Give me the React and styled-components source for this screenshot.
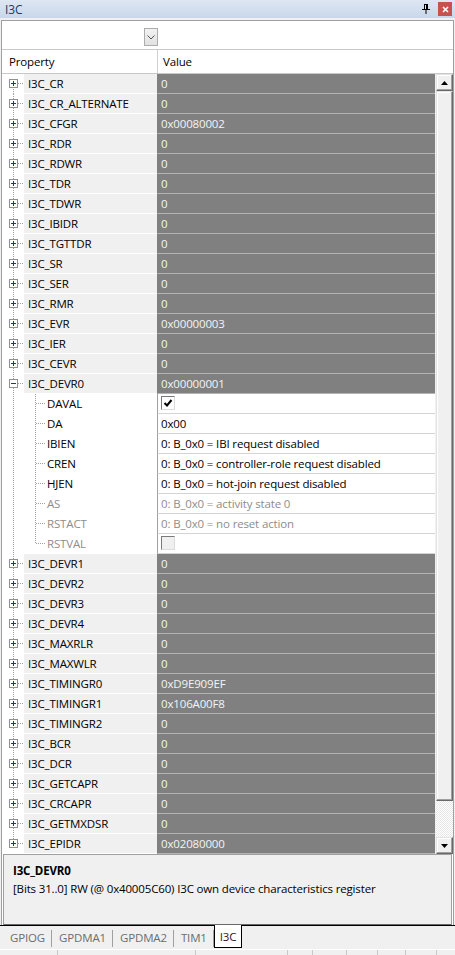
import React from "react";
import styled, { createGlobalStyle } from "styled-components";

const GlobalStyle = createGlobalStyle`
  html, body { margin: 0; padding: 0; background: #f0f0f0; }
  body {
    font-family: "Open Sans", "Noto Sans", "DejaVu Sans", sans-serif;
    font-size: 11.5px;
    letter-spacing: -0.15px;
  }
  * { box-sizing: border-box; }
`;

const registers = [
  ["I3C_CR", "0"],
  ["I3C_CR_ALTERNATE", "0"],
  ["I3C_CFGR", "0x00080002"],
  ["I3C_RDR", "0"],
  ["I3C_RDWR", "0"],
  ["I3C_TDR", "0"],
  ["I3C_TDWR", "0"],
  ["I3C_IBIDR", "0"],
  ["I3C_TGTTDR", "0"],
  ["I3C_SR", "0"],
  ["I3C_SER", "0"],
  ["I3C_RMR", "0"],
  ["I3C_EVR", "0x00000003"],
  ["I3C_IER", "0"],
  ["I3C_CEVR", "0"],
  ["I3C_DEVR0", "0x00000001", true],
  ["I3C_DEVR1", "0"],
  ["I3C_DEVR2", "0"],
  ["I3C_DEVR3", "0"],
  ["I3C_DEVR4", "0"],
  ["I3C_MAXRLR", "0"],
  ["I3C_MAXWLR", "0"],
  ["I3C_TIMINGR0", "0xD9E909EF"],
  ["I3C_TIMINGR1", "0x106A00F8"],
  ["I3C_TIMINGR2", "0"],
  ["I3C_BCR", "0"],
  ["I3C_DCR", "0"],
  ["I3C_GETCAPR", "0"],
  ["I3C_CRCAPR", "0"],
  ["I3C_GETMXDSR", "0"],
  ["I3C_EPIDR", "0x02080000"],
];

const fields = [
  { name: "DAVAL", check: true },
  { name: "DA", value: "0x00" },
  { name: "IBIEN", value: "0: B_0x0 = IBI request disabled" },
  { name: "CREN", value: "0: B_0x0 = controller-role request disabled" },
  { name: "HJEN", value: "0: B_0x0 = hot-join request disabled" },
  { name: "AS", value: "0: B_0x0 = activity state 0", disabled: true },
  { name: "RSTACT", value: "0: B_0x0 = no reset action", disabled: true },
  { name: "RSTVAL", check: false, disabled: true },
];

const tabs = ["GPIOG", "GPDMA1", "GPDMA2", "TIM1"];
const statusCells = [58, 138, 92, 25, 34, 31, 28, 31];

const Window = styled.div`
  width: 455px;
  height: 955px;
  display: flex;
  flex-direction: column;
  background: #f0f0f0;
  overflow: hidden;
`;

const TitleBar = styled.div`
  height: 18px;
  display: flex;
  align-items: center;
  justify-content: space-between;
  padding: 0 3px 0 5px;
  background: linear-gradient(#dee7f3, #c9d7ea);
  color: #1e395b;
  font-size: 12px;
`;

const TitleButtons = styled.div`
  display: flex;
  align-items: center;
  gap: 8px;
`;

const CloseButton = styled.div`
  width: 14px;
  height: 14px;
  background: #c75050;
  display: flex;
  align-items: center;
  justify-content: center;
`;

const Frame = styled.div`
  padding: 2px 1px 0;
  display: flex;
  flex-direction: column;
`;

const Panel = styled.div`
  border: 1px solid #a0a0a0;
  border-bottom: none;
  display: flex;
  flex-direction: column;
  background: #fff;
`;

const Toolbar = styled.div`
  height: 29px;
  padding: 7px 0 0 142px;
  border-bottom: 1px solid #c8c8c8;
  background: #fff;
`;

const DropButton = styled.div`
  width: 14px;
  height: 18px;
  border: 1px solid #acacac;
  background: linear-gradient(#f2f2f2, #e2e2e2);
  display: flex;
  align-items: center;
  justify-content: center;
`;

const Header = styled.div`
  height: 24px;
  display: grid;
  grid-template-columns: 155px 1fr;
  border-bottom: 1px solid #c8c8c8;
  background: #fff;
  color: #000;
`;

const HeaderCell = styled.div`
  display: flex;
  align-items: center;
  padding-left: ${(p) => (p.$value ? 5 : 7)}px;
  border-left: ${(p) => (p.$value ? "1px solid #d0d0d0" : "none")};
`;

const Body = styled.div`
  height: 780px;
  display: flex;
  gap: 1px;
  background: #f0f0f0;
`;

const Rows = styled.div`
  width: 433px;
  display: flex;
  flex-direction: column;
  background: #fff;
`;

const Row = styled.div`
  display: grid;
  grid-template-columns: 22px 133px 1fr;
  height: 20px;
`;

const Gutter = styled.div`
  background: #fff;
  svg { display: block; }
`;

const PropCell = styled.div`
  display: flex;
  align-items: center;
  padding-left: ${(p) => (p.$child ? 0 : 4)}px;
  background: ${(p) => (p.$child ? "#fff" : "#f0f0f0")};
  border-bottom: 1px solid #fff;
  color: ${(p) => (p.$disabled ? "#8d8d8d" : "#000")};
  white-space: nowrap;
  overflow: hidden;
  svg { display: block; flex: none; margin-right: 1px; align-self: flex-start; }
`;

const ValueCell = styled.div`
  display: flex;
  align-items: center;
  padding-left: 3px;
  background: ${(p) => (p.$dark ? "#808080" : "#fff")};
  color: ${(p) => (p.$dark ? "#f4f4f4" : p.$disabled ? "#8d8d8d" : "#000")};
  border-left: 1px solid ${(p) => (p.$dark ? "#808080" : "#a0a0a0")};
  border-bottom: 1px solid ${(p) => (p.$dark ? "#b4b4b4" : "#d4d4d4")};
  white-space: nowrap;
  overflow: hidden;
`;

const CheckBox = styled.div`
  width: 14px;
  height: 14px;
  margin-top: -2px;
  border: 1px solid;
  border-color: #7a7a7a #dcdcdc #dcdcdc #7a7a7a;
  background: ${(p) => (p.$disabled ? "#f0f0f0" : "#fff")};
  display: flex;
  align-items: center;
  justify-content: center;
`;

const ScrollBar = styled.div`
  width: 17px;
  display: flex;
  flex-direction: column;
  background: #f0f0f0;
`;

const ScrollButton = styled.div`
  width: 17px;
  height: 17px;
  flex: none;
  border: 1px solid;
  border-color: #e3e3e3 #696969 #696969 #e3e3e3;
  box-shadow: inset -1px -1px #a0a0a0, inset 1px 1px #fff;
  background: #f0f0f0;
  display: flex;
  align-items: center;
  justify-content: center;
`;

const Track = styled.div`
  flex: 1;
  background: repeating-conic-gradient(#e6e6e6 0 25%, #fff 0 50%) 0 0 / 2px 2px;
`;

const Thumb = styled(ScrollButton)`
  height: 710px;
`;

const DescBox = styled.div`
  height: 71px;
  margin: 0 1px;
  padding: 7px 9px 0;
  border: 1px solid #a0a0a0;
  border-bottom-color: #696969;
  background: #f0f0f0;
  color: #000;
  line-height: 18px;
`;

const DescTitle = styled.div`
  font-weight: 700;
`;

const TabStrip = styled.div`
  height: 24px;
  display: flex;
  background: #f0f0f0;
`;

const TabLine = styled.div`
  border-top: 1px solid #000;
  width: ${(p) => (p.$fill ? "auto" : "3px")};
  flex: ${(p) => (p.$fill ? 1 : "none")};
`;

const Tab = styled.div`
  display: flex;
  align-items: center;
  height: 24px;
  padding: 0 7px;
  border-top: 1px solid #000;
  color: #6d6d6d;
  white-space: nowrap;
  position: relative;
  &:not(:last-of-type)::after {
    content: "";
    position: absolute;
    right: 0;
    top: 4px;
    height: 17px;
    border-right: 1px solid #a0a0a0;
  }
`;

const ActiveTab = styled.div`
  display: flex;
  align-items: center;
  height: 23px;
  padding: 0 5px;
  border: 1px solid #000;
  border-top: none;
  background: #fff;
  color: #1a1a2e;
`;

const StatusBar = styled.div`
  flex: 1;
  display: flex;
  border-top: 1px solid #fff;
  background: #f0f0f0;
`;

const StatusCell = styled.div`
  flex: none;
  border-right: 1px solid #c8c8c8;
`;

const TreeGutter = ({ first, last, expanded, child }) => (
  <svg width="22" height="20">
    <line
      x1="11.5"
      x2="11.5"
      y1={first && !child ? 9 : 0}
      y2={last && !child ? 10 : 20}
      stroke="#a0a0a0"
      strokeDasharray="1 1"
    />
    {!child && (
      <>
        <line x1="16" x2="22" y1="9.5" y2="9.5" stroke="#a0a0a0" strokeDasharray="1 1" />
        <rect x="7.5" y="5.5" width="8" height="8" fill="#fff" stroke="#919191" />
        <line x1="9" x2="14" y1="9.5" y2="9.5" stroke="#1f3a6b" />
        {!expanded && <line x1="11.5" x2="11.5" y1="7" y2="12" stroke="#1f3a6b" />}
      </>
    )}
  </svg>
);

const ChildIndent = ({ last }) => (
  <svg width="22" height="19">
    <line x1="11.5" x2="11.5" y1="0" y2={last ? 10 : 19} stroke="#a0a0a0" strokeDasharray="1 1" />
    <line x1="12" x2="22" y1="9.5" y2="9.5" stroke="#a0a0a0" strokeDasharray="1 1" />
  </svg>
);

const Tick = () => (
  <svg width="10" height="10" viewBox="0 0 10 10">
    <path d="M1.5 5 L4 7.5 L8.5 2" fill="none" stroke="#000" strokeWidth="2" />
  </svg>
);

const Arrow = ({ down }) => (
  <svg width="7" height="4" viewBox="0 0 7 4">
    <path d={down ? "M0 0 H7 L3.5 4 Z" : "M0 4 H7 L3.5 0 Z"} fill="#000" />
  </svg>
);

const FieldRow = ({ field, last }) => (
  <Row>
    <Gutter>
      <TreeGutter child />
    </Gutter>
    <PropCell $child $disabled={field.disabled}>
      <ChildIndent last={last} />
      {field.name}
    </PropCell>
    <ValueCell $disabled={field.disabled}>
      {"check" in field ? (
        <CheckBox $disabled={field.disabled}>{field.check && <Tick />}</CheckBox>
      ) : (
        field.value
      )}
    </ValueCell>
  </Row>
);

const App = () => (
  <>
    <GlobalStyle />
    <Window>
      <TitleBar>
        <span>I3C</span>
        <TitleButtons>
          <svg width="8" height="10" viewBox="0 0 8 10">
            <path d="M2 0.5 H6 M2.5 0.5 V5 M5.5 0.5 V5 M0 5.5 H8 M4 6 V10" stroke="#000" fill="none" />
            <rect x="4" y="1" width="1" height="4" fill="#000" />
          </svg>
          <CloseButton>
            <svg width="7" height="7" viewBox="0 0 7 7">
              <path d="M1 1 L6 6 M6 1 L1 6" stroke="#fff" strokeWidth="1.6" />
            </svg>
          </CloseButton>
        </TitleButtons>
      </TitleBar>
      <Frame>
        <Panel>
          <Toolbar>
            <DropButton>
              <svg width="8" height="5" viewBox="0 0 8 5">
                <path d="M0.5 0.5 L4 4 L7.5 0.5" fill="none" stroke="#555" />
              </svg>
            </DropButton>
          </Toolbar>
          <Header>
            <HeaderCell>Property</HeaderCell>
            <HeaderCell $value>Value</HeaderCell>
          </Header>
          <Body>
            <Rows>
              {registers.map(([name, value, expanded], i) => (
                <React.Fragment key={name}>
                  <Row>
                    <Gutter>
                      <TreeGutter first={i === 0} last={i === registers.length - 1} expanded={expanded} />
                    </Gutter>
                    <PropCell>{name}</PropCell>
                    <ValueCell $dark>{value}</ValueCell>
                  </Row>
                  {expanded &&
                    fields.map((f, j) => <FieldRow key={f.name} field={f} last={j === fields.length - 1} />)}
                </React.Fragment>
              ))}
            </Rows>
            <ScrollBar>
              <ScrollButton>
                <Arrow />
              </ScrollButton>
              <Thumb />
              <Track />
              <ScrollButton>
                <Arrow down />
              </ScrollButton>
            </ScrollBar>
          </Body>
          <DescBox>
            <DescTitle>I3C_DEVR0</DescTitle>
            <div>[Bits 31..0] RW (@ 0x40005C60) I3C own device characteristics register</div>
          </DescBox>
        </Panel>
      </Frame>
      <TabStrip>
        <TabLine />
        {tabs.map((t) => (
          <Tab key={t}>{t}</Tab>
        ))}
        <ActiveTab>I3C</ActiveTab>
        <TabLine $fill />
      </TabStrip>
      <StatusBar>
        {statusCells.map((w, i) => (
          <StatusCell key={i} style={{ width: w }} />
        ))}
      </StatusBar>
    </Window>
  </>
);

export default App;
